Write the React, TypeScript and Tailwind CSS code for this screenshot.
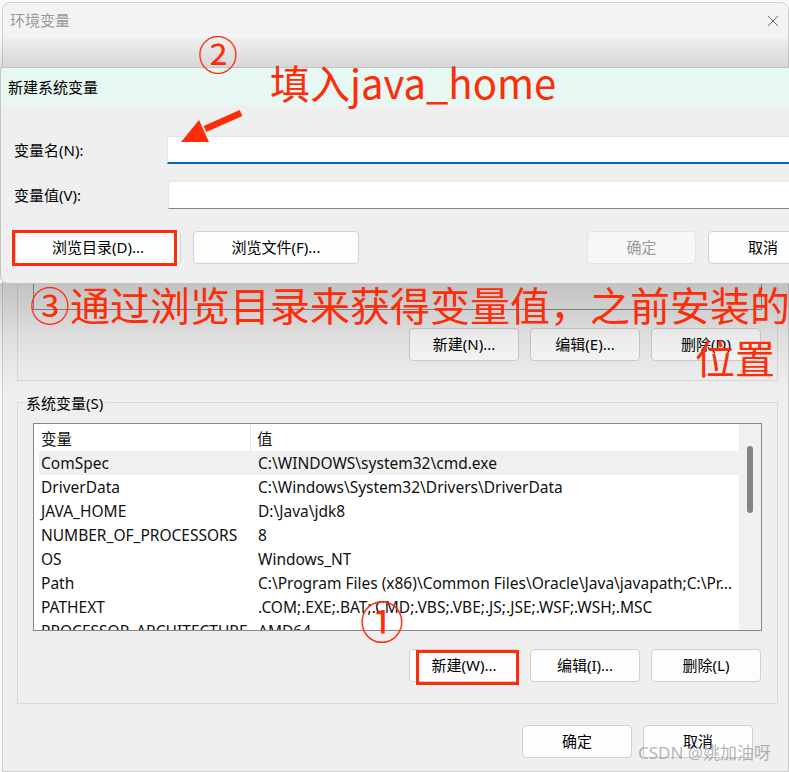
import React from "react";

const Btn = ({ children, className = "" }: { children: React.ReactNode; className?: string }) => (
  <div
    className={
      "h-[33px] flex items-center justify-center rounded-[4px] border border-[#d0d0d0] bg-[#fdfdfd] text-[15px] text-black leading-none " +
      className
    }
  >
    {children}
  </div>
);

const rows: [string, string][] = [
  ["ComSpec", "C:\\WINDOWS\\system32\\cmd.exe"],
  ["DriverData", "C:\\Windows\\System32\\Drivers\\DriverData"],
  ["JAVA_HOME", "D:\\Java\\jdk8"],
  ["NUMBER_OF_PROCESSORS", "8"],
  ["OS", "Windows_NT"],
  ["Path", "C:\\Program Files (x86)\\Common Files\\Oracle\\Java\\javapath;C:\\Pr..."],
  ["PATHEXT", ".COM;.EXE;.BAT;.CMD;.VBS;.VBE;.JS;.JSE;.WSF;.WSH;.MSC"],
  ["PROCESSOR_ARCHITECTURE", "AMD64"],
];

export default function App() {
  return (
    <div className="relative w-[789px] h-[772px] overflow-hidden bg-[#f7f7f7] font-['Noto_Sans','Noto_Sans_CJK_SC',sans-serif]">
      <div className="pt-[2px]">
        {/* main window */}
        <div className="ml-[2px] h-[770px] rounded-t-[8px] border border-[#cfcfcf] bg-[#efefef] flex flex-col">
          <div className="h-[35px] rounded-t-[8px] bg-[#f3f3f3] flex items-center justify-between pl-[7px] pr-[9px]">
            <span className="text-[15px] text-[#9a9a9a]">环境变量</span>
            <svg width="12" height="12" viewBox="0 0 12 12">
              <path d="M1 1L11 11M11 1L1 11" stroke="#6a6a6a" strokeWidth="1" />
            </svg>
          </div>
          <div className="flex flex-col">
            {/* user variables group (top part hidden under the dialog) */}
            <div className="ml-[14px] mr-[10px] mt-[34px] h-[309px] border border-[#d9d9d9] flex flex-col px-[15px] pb-[19px]">
              <div className="flex-1 border border-[#8f8f8f] bg-[#efefef]" />
              <div className="mt-[18px] flex justify-end gap-[11px] pr-[1px]">
                <Btn className="w-[110px]">新建(N)...</Btn>
                <Btn className="w-[110px]">编辑(E)...</Btn>
                <Btn className="w-[110px]">删除(D)</Btn>
              </div>
            </div>
            {/* system variables group */}
            <div className="relative ml-[14px] mr-[10px] mt-[21px] h-[302px] border border-[#d9d9d9] flex flex-col px-[15px] pt-[20px] pb-[20px]">
              <span className="absolute left-[6px] top-[-10px] bg-[#efefef] px-[2px] text-[15px] leading-[20px] text-black">
                系统变量(S)
              </span>
              <div className="h-[208px] border border-[#828790] bg-white flex overflow-hidden">
                <div className="flex-1 min-w-0 flex flex-col pl-[5px] text-[15.5px] text-[#111]">
                  <div className="h-[27px] flex items-center shrink-0">
                    <div className="w-[212px] pl-[2px] pt-[4px] h-full flex items-center border-r border-[#e5e5e5]">变量</div>
                    <div className="pl-[6px] pt-[4px]">值</div>
                  </div>
                  {rows.map(([k, v], i) => (
                    <div
                      key={k}
                      className={"h-[24px] shrink-0 flex items-center whitespace-nowrap pt-[2px] " + (i === 0 ? "bg-[#f0f0f0]" : "")}
                    >
                      <div className="w-[213px] pl-[2px] shrink-0">{k}</div>
                      <div className="pl-[6px] overflow-hidden">{v}</div>
                    </div>
                  ))}
                </div>
                <div className="w-[22px] shrink-0 bg-[#f0f0f0] flex justify-center pt-[22px]">
                  <div className="w-[6px] h-[67px] rounded-full bg-[#858585]" />
                </div>
              </div>
              <div className="mt-[18px] flex justify-end gap-[11px] pr-[1px]">
                <Btn className="w-[110px]">新建(W)...</Btn>
                <Btn className="w-[110px]">编辑(I)...</Btn>
                <Btn className="w-[110px]">删除(L)</Btn>
              </div>
            </div>
            <div className="mt-[21px] mr-[35px] flex justify-end gap-[11px]">
              <Btn className="w-[110px]">确定</Btn>
              <Btn className="w-[110px]">取消</Btn>
            </div>
          </div>
        </div>
      </div>

      {/* shadows of the overlying dialog */}
      <div className="absolute left-0 top-[38px] w-full h-[29px] bg-linear-to-b from-[rgba(0,0,0,0)] to-[rgba(0,0,0,0.1)]" />
      <div className="absolute left-0 top-[283px] w-full h-[107px] bg-linear-to-b from-[rgba(0,0,0,0.19)] via-[rgba(0,0,0,0.07)] to-[rgba(0,0,0,0)]" />

      {/* new system variable dialog */}
      <div className="absolute left-0 top-[67px] w-[830px] h-[217px] rounded-bl-[8px] border border-[#c4c4c4] bg-[#efefef] flex flex-col overflow-hidden">
        <div className="h-[38px] shrink-0 bg-[#e7f7f2] flex items-center pl-[7px] text-[15px] text-black">新建系统变量</div>
        <div className="flex flex-col pl-[13px] pt-[30px]">
          <div className="flex items-center h-[28px]">
            <span className="w-[153px] text-[15px] text-black">变量名(N):</span>
            <div className="flex-1 h-[28px] bg-white border border-[#e6e6e6] border-b-[2px] border-b-[#0067c0]" />
          </div>
          <div className="flex items-center h-[28px] mt-[17px]">
            <span className="w-[154px] text-[15px] text-black">变量值(V):</span>
            <div className="flex-1 h-[28px] bg-white border border-[#e6e6e6] border-b-[#868686]" />
          </div>
          <div className="flex items-center mt-[22px] pl-[1px]">
            <Btn className="w-[166px]">浏览目录(D)...</Btn>
            <Btn className="w-[166px] ml-[12px]">浏览文件(F)...</Btn>
            <Btn className="w-[109px] ml-[228px] !bg-[#f7f7f7] !border-[#e3e3e3] !text-[#9a9a9a]">确定</Btn>
            <Btn className="w-[110px] ml-[12px]">取消</Btn>
          </div>
        </div>
      </div>

      {/* red annotations */}
      <div className="absolute left-[12px] top-[230px] w-[165px] h-[36px] border-[3px] border-[#fe2c09]" />
      <div className="absolute left-[416px] top-[650px] w-[103px] h-[35px] border-[3px] border-[#fe2c09]" />
      <svg className="absolute left-[175px] top-[105px]" width="75" height="45" viewBox="0 0 75 45">
        <path d="M30 24L66 8" stroke="#fe2c09" strokeWidth="6.5" />
        <polygon points="6,37 24,15 34,37" fill="#fe2c09" />
      </svg>
      <div className="absolute left-[198px] top-[33px] text-[40px] leading-none text-[#fe2c09] font-['Noto_Sans_CJK_SC',sans-serif]">②</div>
      <div className="absolute left-[270px] top-[62px] text-[40px] leading-none text-[#fe2c09] font-['Noto_Sans_CJK_SC',sans-serif] whitespace-nowrap">填入java_home</div>
      <div className="absolute left-[30px] top-[284px] text-[40px] leading-none text-[#fe2c09] font-['Noto_Sans_CJK_SC',sans-serif] whitespace-nowrap">③通过浏览目录来获得变量值，之前安装的</div>
      <div className="absolute left-[695px] top-[337px] text-[40px] leading-none text-[#fe2c09] font-['Noto_Sans_CJK_SC',sans-serif] whitespace-nowrap">位置</div>
      <div className="absolute left-[360px] top-[598px] text-[44px] leading-none text-[#fe2c09] font-['Noto_Sans_CJK_SC',sans-serif]">①</div>

      {/* watermark */}
      <div className="absolute left-[638px] top-[742px] text-[17px] leading-[22px] text-[rgba(140,140,140,0.65)] whitespace-nowrap font-['Noto_Sans','Noto_Sans_CJK_SC',sans-serif]">
        CSDN @姚加油呀
      </div>
    </div>
  );
}
